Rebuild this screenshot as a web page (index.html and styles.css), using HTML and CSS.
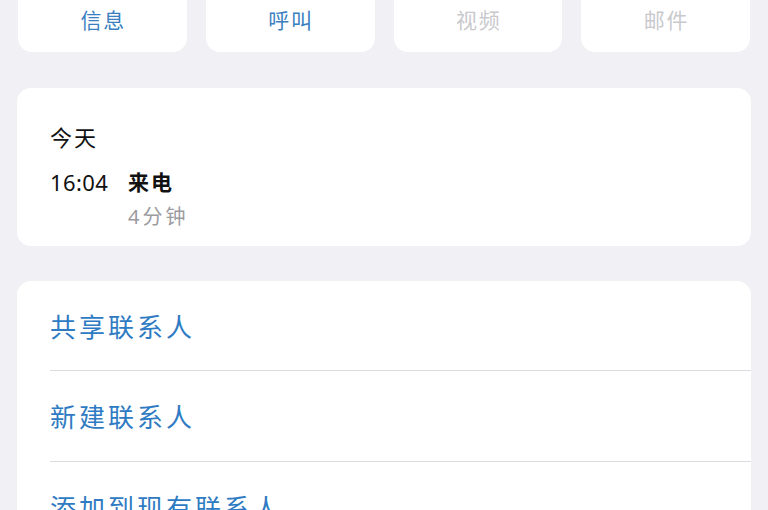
FILE: index.html
```html
<!DOCTYPE html>
<html lang="zh">
<head>
<meta charset="utf-8">
<link rel="stylesheet" href="styles.css">
</head>
<body>
<div class="page">
  <div class="actions">
    <div class="action active">信息</div>
    <div class="action active">呼叫</div>
    <div class="action disabled">视频</div>
    <div class="action disabled">邮件</div>
  </div>

  <div class="card recents">
    <div class="day">今天</div>
    <div class="call first">
      <span class="time">16:04</span>
      <span class="kind">来电</span>
    </div>
    <div class="call">
      <span class="time"></span>
      <span class="duration">4分钟</span>
    </div>
  </div>

  <div class="card list">
    <div class="row">共享联系人</div>
    <div class="row">新建联系人</div>
    <div class="row">添加到现有联系人</div>
  </div>
</div>
</body>
</html>
```

FILE: styles.css
```css
html, body {
  margin: 0;
  padding: 0;
  background: #f0f0f5;
  font-family: "Noto Sans", "Noto Sans CJK SC", sans-serif;
  overflow: hidden;
}

.page {
  padding: 0 17px;
}

.actions {
  display: grid;
  grid-template-columns: repeat(4, 1fr);
  gap: 19px;
  margin: -20px 1px 0;
}

.action {
  height: 72px;
  background: #ffffff;
  border-radius: 14px;
  display: flex;
  align-items: flex-end;
  justify-content: center;
  padding-bottom: 18px;
  box-sizing: border-box;
  font-size: 21px;
  line-height: 28px;
  letter-spacing: 2px;
  text-indent: 2px;
}

.action.active {
  color: #3a7fbf;
}

.action.disabled {
  color: #c9c9cd;
}

.card {
  background: #ffffff;
  border-radius: 14px;
}

.recents {
  margin-top: 36px;
  height: 158px;
  box-sizing: border-box;
  padding: 34px 33px 0;
}

.day {
  font-size: 22px;
  line-height: 30px;
  letter-spacing: 2px;
  color: #111111;
}

.call {
  display: flex;
  align-items: center;
  margin-top: 5px;
}

.call.first {
  margin-top: 15px;
}

.time {
  width: 78px;
  flex: none;
  font-size: 22px;
  line-height: 30px;
  color: #111111;
  letter-spacing: 0.4px;
}

.kind {
  font-size: 21px;
  line-height: 30px;
  font-weight: 600;
  letter-spacing: 2px;
  color: #111111;
}

.duration {
  font-size: 20px;
  line-height: 30px;
  letter-spacing: 3px;
  color: #9b9ba0;
}

.list {
  margin-top: 35px;
  padding-left: 33px;
}

.row {
  height: 90px;
  display: flex;
  align-items: center;
  font-size: 26px;
  letter-spacing: 3px;
  color: #2f7bc3;
  border-bottom: 1px solid #dcdce0;
}

.row:first-child {
  height: 89px;
}
```
